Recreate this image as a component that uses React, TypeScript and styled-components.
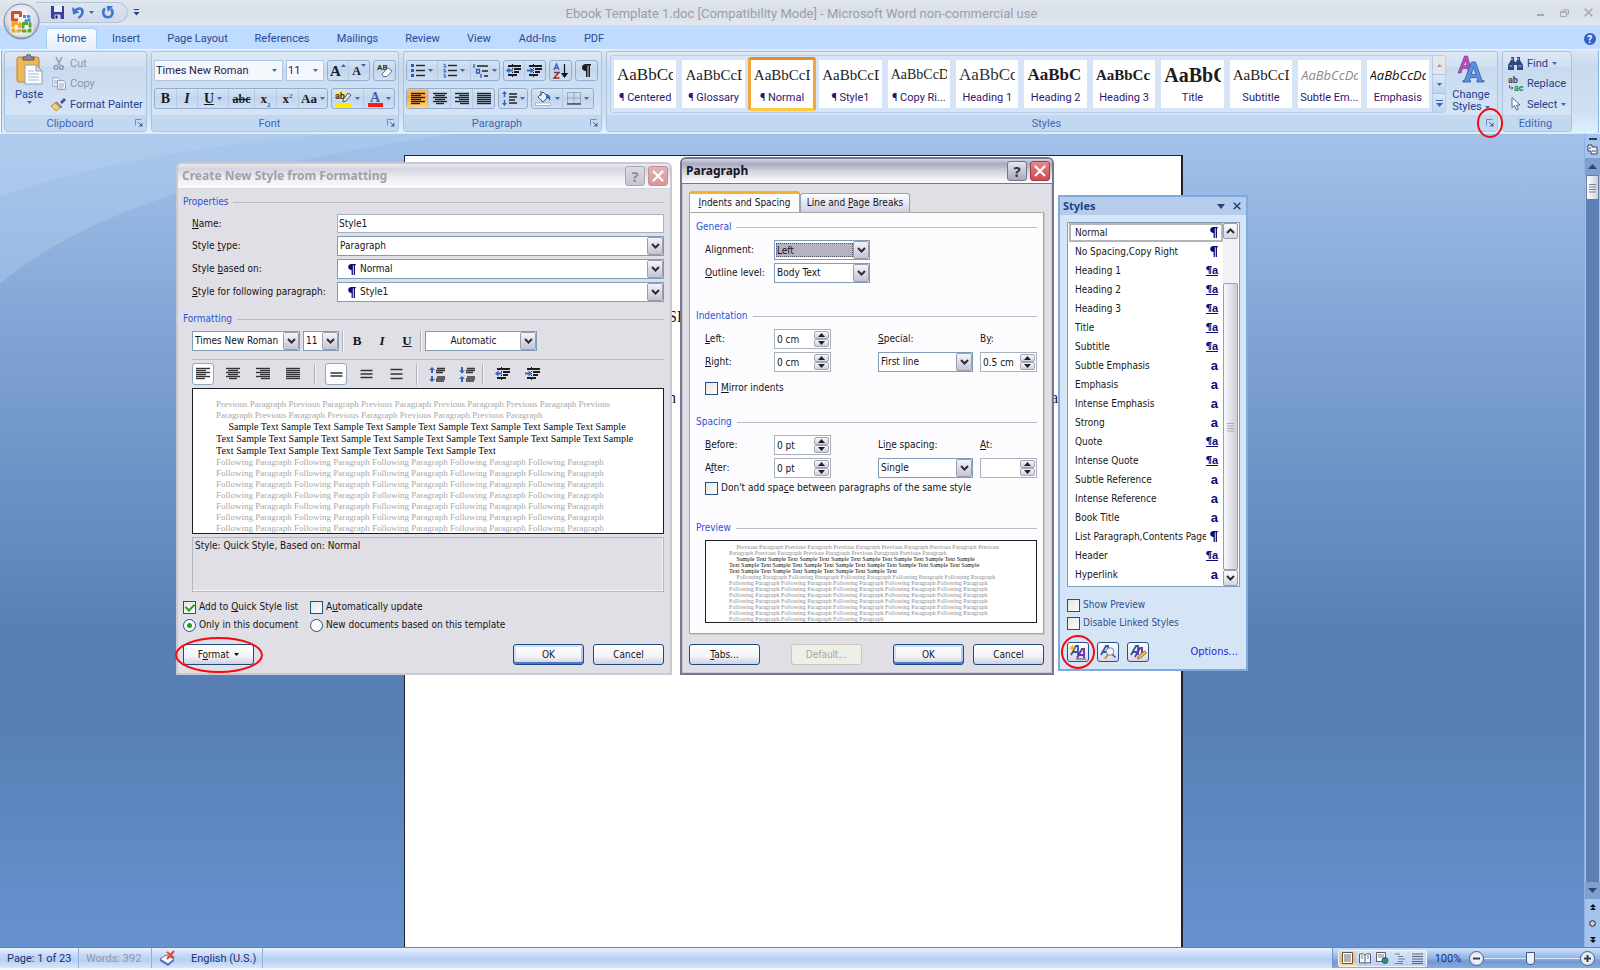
import React from "react";
import styled, { createGlobalStyle, css } from "styled-components";

const UI = `Roboto, "Open Sans", sans-serif`;
const DLG = `"DejaVu Sans Condensed", "DejaVu Sans", sans-serif`;
const SERIF = `"Liberation Serif", serif`;

const Global = createGlobalStyle`
  * { box-sizing: border-box; }
  html, body, #root { height: 100%; }
  body { margin: 0; background: #f4f6f9; font-family: ${UI}; font-size: 11px; color: #1e3a7b; overflow: hidden; }
  button, input, select { font: inherit; color: inherit; }
  svg { display: block; flex: none; overflow: visible; }
`;

const Shell = styled.div`
  height: 100vh;
  display: flex;
  flex-direction: column;
  padding-bottom: 2px;
`;

/* ---------- title bar ---------- */
const TitleBar = styled.header`
  height: 26px;
  flex: none;
  display: flex;
  align-items: center;
  background: linear-gradient(#e3e8ef, #d9dfe8 45%, #e3e8ef);
  border-bottom: 1px solid #cfdcec;
  position: relative;
`;
const OfficeButton = styled.button`
  position: absolute;
  left: 3px;
  top: 3px;
  width: 37px;
  height: 37px;
  padding: 0;
  border: 0;
  background: none;
  z-index: 3;
`;
const QuickAccess = styled.div`
  display: flex;
  align-items: center;
  gap: 8px;
  height: 21px;
  width: 92px;
  margin-left: 36px;
  padding-left: 15px;
  border: 1px solid #b4c3da;
  border-left: 0;
  border-radius: 0 11px 11px 0;
  background: linear-gradient(#dce4ef, #cfdbeb);
`;
const Bare = styled.button`
  border: 0;
  padding: 0;
  background: none;
  display: flex;
  align-items: center;
  gap: 5px;
`;
const MoreButton = styled(Bare)`
  margin-left: 5px;
`;
const DocTitle = styled.h1`
  flex: 1;
  margin: 0;
  text-align: center;
  font-size: 13px;
  font-weight: 400;
  line-height: 16px;
  color: #9b9ea5;
  padding-right: 74px;
  padding-top: 2px;
`;
const WindowButtons = styled.div`
  display: flex;
  align-items: center;
  gap: 15px;
  padding-right: 7px;
`;

/* ---------- tabs ---------- */
const TabBar = styled.nav`
  height: 23px;
  flex: none;
  display: flex;
  align-items: stretch;
  padding: 2px 3px 0 46px;
  background: #bfdbff;
  position: relative;
  z-index: 1;
`;
const RibbonTab = styled.button<{ $on?: boolean; $w: number }>`
  width: ${(p) => p.$w}px;
  border: 1px solid ${(p) => (p.$on ? "#a3d0ee" : "transparent")};
  border-bottom: 0;
  border-radius: 4px 4px 0 0;
  padding: 0 0 2px;
  background: ${(p) => (p.$on ? "linear-gradient(#fafcff, #e6effa)" : "none")};
  color: #2a4a96;
`;
const Spacer = styled.div`
  flex: 1;
`;

/* ---------- ribbon ---------- */
const Ribbon = styled.section`
  flex: none;
  height: 85px;
  display: flex;
  gap: 4px;
  margin: 0 1px;
  padding: 1px 26px 1px 2px;
  border: 1px solid #8db4e3;
  border-top-color: #e8f4fc;
  border-bottom-color: #c9eefa;
  border-radius: 3px;
  background: linear-gradient(#dbe6f4, #c9daee 20%, #cfe0f3 75%, #dff2fd);
`;
const Group = styled.div<{ $w?: number }>`
  ${(p) => (p.$w ? `width: ${p.$w}px;` : "flex: 1; min-width: 0;")}
  display: flex;
  flex-direction: column;
  border: 1px solid #aac4e0;
  border-radius: 3px;
  background: linear-gradient(#dde8f5, #d2e0f1 18%, #c8daef 19%, #d9e8f9);
`;
const GroupBody = styled.div<{ $pad?: string }>`
  flex: 1;
  min-height: 0;
  display: flex;
  padding: ${(p) => p.$pad || "0"};
`;
const GroupLabel = styled.div`
  height: 16px;
  display: flex;
  align-items: center;
  justify-content: flex-end;
  padding-right: 3px;
  background: #c1d8f0;
  color: #4167b0;
  border-radius: 0 0 2px 2px;
`;
const LabelText = styled.span`
  flex: 1;
  text-align: center;
`;
const Launcher = styled(Bare)`
  position: relative;
`;
const BigButton = styled.button<{ $w: number }>`
  width: ${(p) => p.$w}px;
  border: 0;
  padding: 0;
  background: none;
  display: flex;
  flex-direction: column;
  align-items: center;
  color: #23418c;
  line-height: 12px;
  white-space: nowrap;
`;
const BigLabel = styled.span<{ $top: number }>`
  display: flex;
  flex-direction: column;
  align-items: center;
  padding-top: ${(p) => p.$top}px;
  span { display: flex; align-items: center; gap: 3px; }
`;
const SmallButtons = styled.div`
  display: flex;
  flex-direction: column;
  justify-content: space-between;
  align-items: flex-start;
`;
const SmallButton = styled.button`
  border: 0;
  padding: 0;
  background: none;
  height: 18px;
  display: flex;
  align-items: center;
  gap: 4px;
  color: #23418c;
  white-space: nowrap;
  &:disabled { color: #8f959f; }
`;
const IconSlot = styled.span`
  width: 15px;
  display: flex;
  justify-content: center;
`;
const TwoRows = styled.div`
  display: flex;
  flex-direction: column;
  gap: 7px;
  flex: 1;
`;
const ToolRow = styled.div`
  display: flex;
  gap: 3px;
  height: 21px;
`;
const Cluster = styled.div`
  display: flex;
  border: 1px solid #92add0;
  border-radius: 3px;
  background: linear-gradient(#d5e3f4, #c3d6ee 50%, #cfdff3);
`;
const Tool = styled.button<{ $w: number; $on?: boolean }>`
  width: ${(p) => p.$w}px;
  border: 0;
  border-right: 1px solid #b5cae5;
  padding: 0;
  display: flex;
  align-items: center;
  justify-content: center;
  gap: 3px;
  color: #1b1b1b;
  background: ${(p) => (p.$on ? "linear-gradient(#f9bd6b, #fba63e 45%, #ffd972)" : "none")};
  &:last-child { border-right: 0; }
`;
const SizeTool = styled(Tool)`
  gap: 0;
  svg { margin-bottom: 10px; }
`;
const Glyph = styled.span<{ $s?: number; $i?: boolean; $u?: boolean; $x?: boolean }>`
  font-family: ${SERIF};
  font-weight: 700;
  font-size: ${(p) => p.$s || 13}px;
  line-height: 16px;
  font-style: ${(p) => (p.$i ? "italic" : "normal")};
  text-decoration: ${(p) => (p.$u ? "underline" : p.$x ? "line-through" : "none")};
  sub, sup { font-size: 7px; line-height: 0; color: #2c5cb8; }
`;
const ComboCell = styled.label<{ $w: number }>`
  width: ${(p) => p.$w}px;
  display: grid;
  align-items: center;
  justify-items: end;
  background: #f4f8fd;
  border: 1px solid #b2c7e1;
  padding-right: 5px;
  & > * { grid-area: 1 / 1; }
  & > svg { pointer-events: none; }
`;
const FlatSelect = styled.select`
  appearance: none;
  border: 0;
  padding: 0 0 0 1px;
  width: 100%;
  height: 19px;
  background: none;
  color: #2a1850;
`;
const Gallery = styled.div`
  flex: 1;
  min-width: 0;
  height: 58px;
  display: flex;
  border: 1px solid #bad0ea;
  border-radius: 3px;
  background: #d5e5f7;
`;
const Tiles = styled.div`
  flex: 1;
  min-width: 0;
  display: grid;
  grid-template-columns: repeat(12, 1fr);
`;
const Tile = styled.button<{ $on?: boolean }>`
  min-width: 0;
  margin: ${(p) => (p.$on ? "1px 0" : "4px 3px")};
  padding: 0;
  border: ${(p) => (p.$on ? "3px solid" : "0")};
  border-color: #dd8f36 #f3a63b #ffc83d #f3a63b;
  border-radius: ${(p) => (p.$on ? 3 : 0)}px;
  background: #fff;
  display: flex;
  flex-direction: column;
  align-items: center;
  color: #2c1670;
  overflow: hidden;
`;
const Sample = styled.span<{ $s: number; $b?: boolean; $c?: string; $sans?: boolean }>`
  display: block;
  width: calc(100% - 6px);
  height: 30px;
  line-height: 30px;
  text-align: left;
  overflow: hidden;
  white-space: nowrap;
  font-family: ${(p) => (p.$sans ? `"Open Sans", sans-serif` : SERIF)};
  font-style: ${(p) => (p.$sans ? "italic" : "normal")};
  font-weight: ${(p) => (p.$b ? 700 : 400)};
  font-size: ${(p) => p.$s}px;
  color: ${(p) => p.$c || "#1c1c1c"};
`;
const TileName = styled.span`
  white-space: nowrap;
  line-height: 16px;
`;
const GalleryScroll = styled.div`
  width: 13px;
  display: flex;
  flex-direction: column;
  border-left: 1px solid #b5cbe6;
`;
const GalleryArrow = styled.button<{ $off?: boolean }>`
  flex: 1;
  border: 0;
  border-bottom: 1px solid #a9c3e2;
  padding: 0;
  display: flex;
  align-items: center;
  justify-content: center;
  background: ${(p) => (p.$off ? "#e4e6ea" : "linear-gradient(#d9e8f9, #bed5f0)")};
  &:last-child { border-bottom: 0; }
`;

/* ---------- marks ---------- */
const Ring = styled.span<{ $w: number; $h: number }>`
  position: absolute;
  left: 50%;
  top: 50%;
  width: ${(p) => p.$w}px;
  height: ${(p) => p.$h}px;
  transform: translate(-50%, -50%);
  border: 2px solid #f40a10;
  border-radius: 50%;
  pointer-events: none;
  z-index: 5;
`;

/* ---------- workspace ---------- */
const Workspace = styled.main`
  flex: 1;
  min-height: 0;
  display: flex;
  position: relative;
  overflow: hidden;
  background: linear-gradient(#a3c2ea, #7fa3d4 25%, #587fb5 62%, #577fb4 72%, #6693d0);
`;
const Swoosh = styled.svg`
  position: absolute;
  left: 0;
  top: 0;
`;
const DocArea = styled.div`
  flex: 1;
  padding-top: 21px;
  display: flex;
  justify-content: center;
  position: relative;
`;
const Paper = styled.article`
  width: 779px;
  margin-left: 3px;
  background: #fff;
  border: 1px solid #1c2230;
  border-bottom: 0;
  border-right-width: 2px;
  padding-top: 152px;
  font-family: ${SERIF};
  color: #141414;
  font-size: 16px;
`;
const PaperLine = styled.p<{ $gap?: number }>`
  display: flex;
  justify-content: space-between;
  margin: 0 123px ${(p) => p.$gap || 0}px 263px;
  line-height: 18px;
`;
const ScrollRail = styled.div`
  width: 16px;
  display: flex;
  flex-direction: column;
  align-items: center;
  background: #a4c3ee;
  border-left: 1px solid #8fb2e0;
  padding-top: 4px;
`;
const RailButton = styled.button<{ $h: number; $dark?: boolean }>`
  height: ${(p) => p.$h}px;
  width: 100%;
  border: 0;
  padding: 0;
  display: flex;
  align-items: center;
  justify-content: center;
  background: ${(p) => (p.$dark ? "#7f9fcc" : "none")};
`;
const RailTrack = styled.div`
  flex: 1;
  width: 13px;
  background: #5c80b4;
`;
const RailThumb = styled.div`
  height: 25px;
  border: 1px solid #6b7d9c;
  border-radius: 2px;
  background: linear-gradient(90deg, #fdfeff, #c8d2e0);
  display: flex;
  align-items: center;
  justify-content: center;
`;

/* ---------- dialogs ---------- */
const Dialog = styled.section<{ $x: number; $y: number; $w: number; $active?: boolean }>`
  position: absolute;
  left: ${(p) => p.$x}px;
  top: ${(p) => p.$y}px;
  width: ${(p) => p.$w}px;
  border: 2px solid ${(p) => (p.$active ? "#77778f" : "#c9c9d6")};
  border-radius: 6px 6px 0 0;
  background: #e0dfe5;
  font-family: ${DLG};
  font-size: 10px;
  line-height: 14px;
  color: #141420;
  ${(p) => p.$active && css`box-shadow: inset 0 0 0 1px #c7c7d6;`}
`;
const DialogTitle = styled.header<{ $active?: boolean }>`
  height: 25px;
  display: flex;
  align-items: center;
  gap: 3px;
  padding: 0 2px 0 4px;
  border-radius: 4px 4px 0 0;
  border-bottom: ${(p) => (p.$active ? "1px solid #77778f" : "1px solid #d4d4dc")};
  background: ${(p) =>
    p.$active
      ? "linear-gradient(#d5d5e2, #a9a9c2 20%, #d8d8e4 55%, #fdfdff)"
      : "linear-gradient(#ebebf1, #d5d5e0 20%, #ebebf1 55%, #fdfdfe)"};
  h2 {
    flex: 1;
    margin: 0;
    font-family: "Noto Sans", sans-serif;
    font-size: 12px;
    font-weight: 700;
    color: ${(p) => (p.$active ? "#15151f" : "#a0a0a8")};
  }
`;
const CaptionButton = styled.button<{ $close?: boolean; $active?: boolean }>`
  width: 20px;
  height: 20px;
  padding: 0;
  display: flex;
  align-items: center;
  justify-content: center;
  border-radius: 3px;
  border: 1px solid ${(p) => (p.$close ? (p.$active ? "#9c3a45" : "#c58d94") : p.$active ? "#74748c" : "#a7a7b5")};
  background: ${(p) =>
    p.$close
      ? p.$active ? "linear-gradient(#e88a8a, #cf4650)" : "linear-gradient(#e3b3b5, #d6969b)"
      : p.$active ? "linear-gradient(#e6e6ef, #a9a9bf)" : "linear-gradient(#dddde5, #c4c4cf)"};
  font-family: "Noto Sans", sans-serif;
  font-weight: 700;
  font-size: 15px;
  color: ${(p) => (p.$active ? "#33333f" : "#8f8f9a")};
`;
const Legend = styled.h3`
  display: flex;
  align-items: center;
  gap: 5px;
  margin: 0;
  height: 14px;
  font-size: 10px;
  font-weight: 400;
  color: #2b53d6;
  &::after { content: ""; flex: 1; border-top: 1px solid #b9b9c2; }
`;
const NewStyleBody = styled.div`
  padding: 6px 6px 8px 5px;
`;
const Fields = styled.div`
  display: grid;
  grid-template-columns: 145px 1fr;
  row-gap: 3px;
  align-items: center;
  padding: 5px 0 10px 9px;
`;
const Box = styled.input<{ $w?: string }>`
  width: ${(p) => p.$w || "100%"};
  height: 19px;
  border: 1px solid #a8b1bd;
  padding: 0 1px;
  background: #fff;
`;
const Drop = styled.div<{ $w?: string }>`
  width: ${(p) => p.$w || "100%"};
  height: 20px;
  display: grid;
  grid-template-columns: 1fr 16px;
  align-items: center;
  border: 1px solid #7f9db9;
  background: #fff;
`;
const DropSelect = styled.select<{ $pad?: number; $hot?: boolean; $center?: boolean }>`
  grid-area: 1 / 1 / 2 / 3;
  appearance: none;
  width: 100%;
  height: 18px;
  border: 0;
  padding: 0 17px 0 ${(p) => p.$pad ?? 2}px;
  background: none;
  outline: 0;
  text-align: ${(p) => (p.$center ? "center" : "left")};
  ${(p) =>
    p.$hot &&
    css`
      background: #b3b3c1;
      border: 1px dotted #55556a;
      height: 14px;
      width: 77px;
      margin-left: 1px;
      padding: 0;
      line-height: 11px;
    `}
`;
const DropArrow = styled.span`
  grid-area: 1 / 2;
  height: 18px;
  display: flex;
  align-items: center;
  justify-content: center;
  border: 1px solid #9c9cae;
  border-radius: 2px;
  background: linear-gradient(#f4f4f9, #c4c4d3);
  pointer-events: none;
`;
const Mark = styled.span`
  grid-area: 1 / 1;
  padding-left: 10px;
  pointer-events: none;
`;
const Bar = styled.div`
  display: flex;
  align-items: center;
  padding-left: 9px;
`;
const FontBar = styled(Bar)`
  margin-top: 4px;
  gap: 3px;
`;
const ParaBar = styled(Bar)`
  margin: 7px 0 3px 9px;
  padding: 3px 0 0;
  border-top: 1px solid #b9b9c2;
`;
const Rule = styled.span<{ $l?: number; $r?: number }>`
  width: 2px;
  height: 21px;
  border-left: 1px solid #b0b0ba;
  border-right: 1px solid #f7f7fa;
  margin: 0 ${(p) => p.$r ?? 0}px 0 ${(p) => p.$l ?? 0}px;
`;
const IconToggle = styled.button<{ $w?: number; $on?: boolean }>`
  width: ${(p) => p.$w || 22}px;
  height: 22px;
  padding: 0;
  display: flex;
  align-items: center;
  justify-content: center;
  border: 1px solid ${(p) => (p.$on ? "#8fa8c0" : "transparent")};
  border-radius: 3px;
  background: ${(p) => (p.$on ? "#fcfdfe" : "none")};
`;
const ToggleSet = styled.div<{ $gap?: number }>`
  display: flex;
  gap: ${(p) => p.$gap ?? 8}px;
`;
const Preview = styled.div`
  margin-left: 9px;
  height: 146px;
  border: 1px solid #1d1d24;
  background: #fff;
  padding: 10px 0 0 23px;
  overflow: hidden;
  font-family: ${SERIF};
  font-size: 9px;
  line-height: 11px;
  color: #a8a8a8;
  white-space: pre;
`;
const SmallPreview = styled.div`
  margin: 5px 0 0 9px;
  height: 83px;
  border: 1px solid #1d1d24;
  background: #fff;
  padding: 3px 0 0 23px;
  overflow: hidden;
  font-family: ${SERIF};
  font-size: 6px;
  line-height: 6px;
  color: #8b8b8b;
  white-space: pre;
`;
const SampleLines = styled.div<{ $lh?: number; $s?: number }>`
  color: #080808;
  ${(p) => p.$lh && `line-height: ${p.$lh}px;`}
  ${(p) => p.$s && `font-size: ${p.$s}px;`}
`;
const Description = styled.div`
  margin: 3px 0 8px 9px;
  height: 55px;
  border: 1px solid #b2b8c1;
  box-shadow: inset -1px -1px 0 #f6f6f9;
  padding: 1px 2px;
`;
const Choices = styled.div`
  display: grid;
  grid-template-columns: 127px 1fr;
  row-gap: 4px;
`;
const Choice = styled.label`
  display: flex;
  align-items: center;
  gap: 3px;
  height: 14px;
  white-space: nowrap;
`;
const Check = styled.input.attrs({ type: "checkbox" })`
  appearance: none;
  flex: none;
  width: 13px;
  height: 13px;
  margin: 0;
  border: 1px solid #22527f;
  background: linear-gradient(135deg, #e6e6e2, #fdfdfd);
  display: flex;
  align-items: center;
  justify-content: center;
  &:checked::after {
    content: "";
    width: 4px;
    height: 7px;
    margin-bottom: 2px;
    border: solid #21a121;
    border-width: 0 2px 2px 0;
    transform: rotate(45deg);
  }
`;
const Radio = styled.input.attrs({ type: "radio" })`
  appearance: none;
  flex: none;
  width: 13px;
  height: 13px;
  margin: 0;
  border: 1px solid #22527f;
  border-radius: 50%;
  background: #fbfbfa;
  display: flex;
  align-items: center;
  justify-content: center;
  &:checked::after { content: ""; width: 5px; height: 5px; border-radius: 50%; background: #21a121; }
`;
const Push = styled.button<{ $main?: boolean }>`
  position: relative;
  width: 71px;
  height: 21px;
  padding: 0;
  border: 1px solid #1f4a80;
  border-radius: 3px;
  background: linear-gradient(#fff, #f3f3f8 60%, #cfcfdf);
  display: flex;
  align-items: center;
  justify-content: center;
  gap: 5px;
  ${(p) => p.$main && css`box-shadow: inset 0 2px 0 #cfe0fb, inset 0 -2px 0 #4d78cc, inset 2px 0 0 #cfdff8, inset -2px 0 0 #b5caf0;`}
  &:disabled { color: #a5a59c; border-color: #c9c7ba; background: #efefea; }
`;
const Footer = styled.footer<{ $top: number }>`
  display: flex;
  align-items: center;
  margin-top: ${(p) => p.$top}px;
  gap: 9px;
`;
const ParagraphBody = styled.div`
  padding: 7px 8px 8px 7px;
`;
const TabStrip = styled.div`
  display: flex;
  align-items: flex-end;
`;
const DlgTab = styled.button<{ $on?: boolean; $w: number }>`
  width: ${(p) => p.$w}px;
  height: ${(p) => (p.$on ? 21 : 19)}px;
  padding: 0;
  white-space: nowrap;
  border: 1px solid #91a7b4;
  border-bottom: 0;
  border-radius: 3px 3px 0 0;
  background: ${(p) => (p.$on ? "#fcfcfe" : "linear-gradient(#fff, #cfcfe0)")};
  ${(p) => p.$on && css`border-top: 3px solid #f5b02f;`}
`;
const TabPanel = styled.div`
  border: 1px solid #a3aa9e;
  box-shadow: 1px 1px 0 #c9c9bd;
  background: #fcfcfe;
  padding: 7px 6px 10px 6px;
`;
const Grid2 = styled.div<{ $gap: number }>`
  display: grid;
  grid-template-columns: 69px 104px 102px 1fr;
  row-gap: 3px;
  align-items: center;
  padding: 6px 0 ${(p) => p.$gap}px 9px;
`;
const Wide = styled.div<{ $top: number }>`
  grid-column: 1 / -1;
  padding-top: ${(p) => p.$top}px;
`;
const Spin = styled.div`
  width: 57px;
  height: 20px;
  display: flex;
  align-items: center;
  border: 1px solid #a8b1bd;
  background: #fff;
  padding-right: 1px;
  input { flex: 1; min-width: 0; height: 18px; border: 0; padding: 0 2px; background: none; outline: 0; }
`;
const SpinArrows = styled.div`
  width: 15px;
  display: flex;
  flex-direction: column;
`;
const SpinButton = styled.button`
  height: 8px;
  padding: 0;
  border: 1px solid #a5a5b5;
  border-radius: 2px;
  background: linear-gradient(#f7f7fb, #d0d0dc);
  display: flex;
  align-items: center;
  justify-content: center;
`;

/* ---------- styles pane ---------- */
const Pane = styled.aside`
  position: absolute;
  left: 1058px;
  top: 61px;
  width: 190px;
  border: 2px solid #82a9dd;
  background: #d6e5f5;
  font-family: ${DLG};
  font-size: 10px;
  line-height: 14px;
  color: #2d4f93;
`;
const PaneTitle = styled.header`
  height: 18px;
  display: flex;
  align-items: center;
  gap: 8px;
  padding: 0 5px 0 3px;
  background: #b5cdeb;
  h2 { flex: 1; margin: 0; font-family: "Noto Sans", sans-serif; font-size: 11px; font-weight: 700; color: #1d4389; }
`;
const PaneBody = styled.div`
  padding: 7px 6px 7px 7px;
`;
const ListBox = styled.div`
  display: flex;
  height: 365px;
  border: 1px solid #7f9db9;
  background: #fff;
  padding: 0 1px;
`;
const List = styled.ul`
  flex: 1;
  min-width: 0;
  margin: 0;
  padding: 0;
  list-style: none;
`;
const Item = styled.li<{ $on?: boolean }>`
  height: 19px;
  display: flex;
  align-items: center;
  gap: 4px;
  padding: ${(p) => (p.$on ? "0 3px 0 4px" : "0 5px 0 6px")};
  border: ${(p) => (p.$on ? "2px solid #b4b4bd" : "0")};
  color: #161620;
`;
const ItemName = styled.span`
  flex: 1;
  min-width: 0;
  overflow: hidden;
  white-space: nowrap;
`;
const Kind = styled.span<{ $linked?: boolean }>`
  display: flex;
  align-items: center;
  font-family: "Liberation Sans", sans-serif;
  font-weight: 700;
  font-size: ${(p) => (p.$linked ? 11 : 13)}px;
  line-height: ${(p) => (p.$linked ? 9 : 11)}px;
  color: #0b0b7a;
  border-bottom: ${(p) => (p.$linked ? "1px solid #0b0b7a" : "0")};
`;
const ListScroll = styled.div`
  width: 15px;
  display: flex;
  flex-direction: column;
  background: #f1f1f6;
`;
const ListArrow = styled.button`
  height: 16px;
  padding: 0;
  border: 1px solid #9c9cae;
  border-radius: 2px;
  background: linear-gradient(#fcfcfe, #d5d5e0);
  display: flex;
  align-items: center;
  justify-content: center;
`;
const ListThumb = styled.div`
  flex: 1;
  margin-top: 44px;
  border: 1px solid #9c9cae;
  border-radius: 2px;
  background: linear-gradient(90deg, #f8f8fb, #cdcddb);
  display: flex;
  align-items: center;
  justify-content: center;
`;
const PaneChecks = styled.div`
  display: flex;
  flex-direction: column;
  gap: 4px;
  padding: 11px 0 12px;
`;
const PaneFooter = styled.div`
  display: flex;
  align-items: center;
  gap: 8px;
  padding: 0 2px 0 0;
  a { margin-left: auto; font-size: 11px; color: #2626e0; text-decoration: none; }
`;
const PaneButton = styled.button`
  position: relative;
  width: 22px;
  height: 20px;
  padding: 0;
  border: 1px solid #25508a;
  border-radius: 3px;
  background: linear-gradient(#fff, #d8d8e6);
  display: flex;
  align-items: center;
  justify-content: center;
`;

/* ---------- status bar ---------- */
const StatusBar = styled.footer`
  flex: none;
  height: 21px;
  display: flex;
  border-top: 1px solid #5b83bd;
  background: linear-gradient(#eaf3fe, #c5daf7 35%, #b5cff4 60%, #d7e6fa);
  color: #1c2f70;
`;
const StatusCell = styled.div<{ $w: number; $dim?: boolean }>`
  width: ${(p) => p.$w}px;
  display: flex;
  align-items: center;
  padding-left: 7px;
  gap: 15px;
  border-right: 1px solid #8fb0de;
  color: ${(p) => (p.$dim ? "#8f96a3" : "inherit")};
  white-space: nowrap;
`;
const StatusRight = styled.div`
  width: 268px;
  display: flex;
  align-items: center;
  padding: 0 5px;
  background: linear-gradient(#cfe1fa, #8fb4e9 50%, #7298cf 70%, #86addf);
  border-left: 1px solid #6f96cf;
`;
const Views = styled.div`
  display: flex;
  width: 89px;
  height: 17px;
  border: 1px solid #f0f6fd;
  border-radius: 2px;
  background: linear-gradient(#d9e7f9, #b8d0f0);
`;
const ViewButton = styled.button<{ $on?: boolean }>`
  flex: 1;
  border: 0;
  border-right: 1px solid #c9dbf2;
  padding: 0;
  display: flex;
  align-items: center;
  justify-content: center;
  background: ${(p) => (p.$on ? "linear-gradient(#fbd49c, #fbb65c 60%, #ffe38c)" : "none")};
  &:last-child { border-right: 0; }
`;
const Percent = styled.span`
  width: 42px;
  text-align: center;
`;
const RoundButton = styled.button`
  width: 15px;
  height: 15px;
  flex: none;
  padding: 0;
  border: 1px solid #4d6486;
  border-radius: 50%;
  background: radial-gradient(#fff, #cfdaea);
  display: flex;
  align-items: center;
  justify-content: center;
`;
const Zoom = styled.input.attrs({ type: "range" })`
  appearance: none;
  flex: 1;
  min-width: 0;
  margin: 0;
  height: 15px;
  background: linear-gradient(#dce9fb, #dce9fb) center / 100% 1px no-repeat;
  &::-webkit-slider-thumb {
    appearance: none;
    width: 9px;
    height: 13px;
    border: 1px solid #455c80;
    border-radius: 1px 1px 5px 5px;
    background: #eef2f8;
  }
`;

/* ---------- icons ---------- */
const Caret = ({ c = "#3e68ae", w = 5 }: { c?: string; w?: number }) => (
  <svg width={w} height={Math.ceil(w * 0.55)} viewBox="0 0 5 3" preserveAspectRatio="none"><path d="M0 0h5L2.5 3z" fill={c} /></svg>
);
const UpCaret = ({ c = "#3e68ae", w = 5 }: { c?: string; w?: number }) => (
  <svg width={w} height={Math.ceil(w * 0.55)} viewBox="0 0 5 3" preserveAspectRatio="none"><path d="M0 3h5L2.5 0z" fill={c} /></svg>
);
const Chevron = ({ up }: { up?: boolean }) => (
  <svg width={9} height={6} viewBox="0 0 9 6">
    <path d={up ? "M1 5l3.500-3.500L8 5" : "M1 1l3.500 3.500L8 1"} fill="none" stroke="#2c2c38" strokeWidth={2} />
  </svg>
);
const Lines = ({ w, c = "#222" }: { w: [number, number][]; c?: string }) => (
  <svg width={14} height={12} viewBox="0 0 14 12">
    {w.map(([a, b], i) => <path key={i} d={`M${a} ${i * 2 + 0.5}H${b}`} stroke={c} strokeWidth={1.400} />)}
  </svg>
);
const L: Record<string, [number, number][]> = {
  left: [[0, 14], [0, 10], [0, 14], [0, 10], [0, 14], [0, 9]],
  center: [[0, 14], [2, 12], [0, 14], [2, 12], [0, 14], [3, 11]],
  right: [[0, 14], [4, 14], [0, 14], [4, 14], [0, 14], [5, 14]],
  full: [[0, 14], [0, 14], [0, 14], [0, 14], [0, 14], [0, 14]],
};
const Spaced = ({ g }: { g: number }) => (
  <svg width={13} height={14} viewBox="0 0 13 14">
    {(g === 2 ? [6, 9] : g === 3 ? [3.5, 7, 10.5] : [2.5, 7, 11.500]).map((y) => (
      <path key={y} d={`M0.500 ${y}h12`} stroke="#333" strokeWidth={1.5} />
    ))}
  </svg>
);
const Bullets = ({ n }: { n?: boolean }) => (
  <svg width={14} height={13} viewBox="0 0 14 13">
    {[1.5, 6.5, 11.500].map((y) => (
      <g key={y}>
        {n ? <path d={`M0.500 ${y - 1.2}h1.500v2.600M0.500 ${y + 1.400}h3`} stroke="#2c5cb8" fill="none" /> : <rect x={0} y={y - 1.5} width={3} height={3} fill="#2c5cb8" />}
        <path d={`M5 ${y}h9`} stroke="#222" strokeWidth={1.4} />
      </g>
    ))}
  </svg>
);
const MultiLevel = () => (
  <svg width={16} height={14} viewBox="0 0 16 14">
    <path d="M1 0v4M3.500 5.500h3v3.500h-3zM8 10v4" stroke="#2c5cb8" fill="none" strokeWidth={1.3} />
    <path d="M4 2h11M9 7h6M11 12h4" stroke="#222" strokeWidth={1.4} />
  </svg>
);
const Indent = ({ right }: { right?: boolean }) => (
  <svg width={16} height={14} viewBox="0 0 16 14">
    <path d="M2 2h13M8 5h7M8 8h5M2 11h9" stroke="#1d1d1d" strokeWidth={1.8} />
    <path d="M6.500 0v14" stroke="#1d1d1d" strokeDasharray="1 1" />
    <path d={right ? "M7 6.500L3.500 3.500v2H0v2h3.500v2z" : "M0 6.500l3.500-3v2H7v2H3.500v2z"} fill="#3367c7" />
  </svg>
);
const ParaSpace = ({ tight }: { tight?: boolean }) => (
  <svg width={16} height={15} viewBox="0 0 16 15">
    <path d="M8 1.500h8M7 3.500h9M7 5.500h7M8 10h8M7 12h9M7 14h8" stroke="#333" strokeWidth={1.400} />
    {tight ? (
      <path d="M3 6.500l3-3H4V0H2v3.500H0zM3 9l3 3H4v3H2v-3H0z" fill="#2f62c2" />
    ) : (
      <path d="M3 0l3 3H4v3H2V3H0zM3 15l3-3H4V9H2v3H0z" fill="#2f62c2" />
    )}
  </svg>
);
const LineSpacing = () => (
  <svg width={15} height={15} viewBox="0 0 15 15">
    <path d="M2.500 0L5 3H3.200v3H1.800V3H0zM2.500 15L5 12H3.200V9H1.800v3H0z" fill="#2f62c2" />
    <path d="M7 3h8M7 6h8M7 9h6M7 12h8" stroke="#222" strokeWidth={1.4} />
  </svg>
);
const Bucket = () => (
  <svg width={17} height={15} viewBox="0 0 17 15">
    <path d="M3 6l5-5 5 5-5 5z" fill="#eef2f8" stroke="#44506a" />
    <path d="M6 0v5" stroke="#44506a" />
    <path d="M11 3c4 0 5 4 4 7-1-2-2-3-4-3z" fill="#3367c7" />
    <rect x={0.500} y={12} width={15} height={2.500} fill="#fff" stroke="#8a8f9a" strokeWidth={0.6} />
  </svg>
);
const Borders = () => (
  <svg width={14} height={13} viewBox="0 0 14 13">
    <path d="M.5.5h13v11H.5zM7 .5v11M.5 6h13" fill="none" stroke="#777d8a" strokeDasharray="1 1" />
    <path d="M0 12h14" stroke="#444" strokeWidth={1.4} />
  </svg>
);
const SortIcon = () => (
  <svg width={15} height={16} viewBox="0 0 15 16">
    <path d="M1 7l2.500-6L6 7M2 5h3" stroke="#2f62c2" fill="none" strokeWidth={1.3} />
    <path d="M1 9.500h5L1 15h5.500" stroke="#a1281e" fill="none" strokeWidth={1.4} />
    <path d="M11.500 1v12M9 10.500l2.500 3.500 2.500-3.500z" stroke="#111" fill="#111" strokeWidth={1.2} />
  </svg>
);
const Pilcrow = ({ s = 13, c = "#1b1b1b" }: { s?: number; c?: string }) => (
  <svg width={Math.round(s * 0.7)} height={s} viewBox="0 0 9 13">
    <path d="M9 0v1.500H8V13H6.500V1.500H5.500V13H4V7C1.500 7 0 5.500 0 3.500S1.500 0 4 0z" fill={c} />
  </svg>
);
const LaunchIcon = () => (
  <svg width={8} height={8} viewBox="0 0 8 8">
    <path d="M.5 6.500v-6h6" fill="none" stroke="#6d8fc0" />
    <path d="M3 3l3 3" stroke="#4c6da5" /><path d="M7.500 3.500v4h-4z" fill="#4c6da5" />
  </svg>
);
const OfficeLogo = () => (
  <svg width={37} height={37} viewBox="0 0 37 37">
    <defs>
      <radialGradient id="orb" cx="50%" cy="35%" r="65%">
        <stop offset="0" stopColor="#fff" /><stop offset=".7" stopColor="#d3dae5" /><stop offset="1" stopColor="#8d9cb5" />
      </radialGradient>
    </defs>
    <circle cx={18.500} cy={18.500} r={17.500} fill="url(#orb)" stroke="#7d8aa3" />
    <ellipse cx={18.500} cy={27} rx={12} ry={7} fill="#fff" opacity={0.6} />
    <g fill="none" strokeWidth={3} strokeLinejoin="round">
      <path d="M15 17H9.500V9.500h8V14" stroke="#dd4a1c" />
      <path d="M20 13.500h6V18h-5" stroke="#3f8fd6" strokeDasharray="3 1" />
      <path d="M10 20.500h6.500V28H10z" stroke="#f2a51d" strokeDasharray="5 1" />
      <path d="M20 20.500h7V28h-7z" stroke="#5aa532" strokeDasharray="5 1" />
    </g>
  </svg>
);
const Save = () => (
  <svg width={13} height={13} viewBox="0 0 13 13">
    <path d="M0 0h13v13H1.500L0 11.500z" fill="#3b3d9b" /><rect x={3} y={0} width={8} height={6} fill="#e9eefb" />
    <rect x={3.500} y={8.500} width={6} height={4.500} fill="#d7dbe8" /><rect x={4.500} y={9.500} width={2} height={3} fill="#1c1d55" />
  </svg>
);
const Undo = () => (
  <svg width={12} height={13} viewBox="0 0 12 13">
    <path d="M3 5c3-4 8-3 7.500 1.500C10.300 9 8.500 10.500 6.500 12" fill="none" stroke="#3f76cf" strokeWidth={2.600} />
    <path d="M0 1l1 7.500 6.500-2z" fill="#3f76cf" />
  </svg>
);
const Redo = () => (
  <svg width={12} height={13} viewBox="0 0 12 13">
    <path d="M3 2.500C0 5 .8 11 5.500 11.300c5 .3 6.500-5.300 3.500-8.300" fill="none" stroke="#3f76cf" strokeWidth={2.600} />
    <path d="M4.500 0H11L6 6z" fill="#3f76cf" />
  </svg>
);
const PasteIcon = () => (
  <svg width={27} height={31} viewBox="0 0 27 31">
    <rect x={1} y={3} width={22} height={25} rx={2} fill="#efb854" stroke="#b98534" />
    <path d="M7 5V3h3a2.500 2.500 0 0 1 5 0h3v3H7z" fill="#8b8e95" stroke="#5a5d66" />
    <path d="M9 11h11l6 6v13H9z" fill="#fdfdff" stroke="#8fa0bd" /><path d="M20 11v6h6z" fill="#d4dcea" stroke="#8fa0bd" />
    <path d="M12 17h6M12 20h11M12 23h11M12 26h11" stroke="#a9b8d2" />
  </svg>
);
const CutIcon = () => (
  <svg width={12} height={13} viewBox="0 0 12 13">
    <path d="M3 0l4 8M9 0L5 8" stroke="#8fa0b8" strokeWidth={1.600} />
    <circle cx={3} cy={10.500} r={1.900} fill="none" stroke="#7f93b3" strokeWidth={1.300} /><circle cx={8.500} cy={10.500} r={1.900} fill="none" stroke="#7f93b3" strokeWidth={1.300} />
  </svg>
);
const CopyIcon = () => (
  <svg width={14} height={13} viewBox="0 0 14 13">
    <path d="M.5.5h6l2 2v7h-8z" fill="#e2e8f1" stroke="#a5b1c6" /><path d="M5.500 3.500h6l2 2v7h-8z" fill="#eef2f8" stroke="#93a2bb" />
    <path d="M7 7h5M7 9h5M7 11h4M2 4h3M2 6h3" stroke="#a5b1c6" />
  </svg>
);
const BrushIcon = () => (
  <svg width={15} height={13} viewBox="0 0 15 13">
    <path d="M9 4l4-4 2 2-4 4z" fill="#5b4b8a" /><path d="M6 4l5 5-1 1-6-5z" fill="#9aa2b5" stroke="#555" strokeWidth={0.600} />
    <path d="M4.500 5L9 9.500 5 13 0 8z" fill="#f1d36a" stroke="#a57b22" strokeWidth={0.800} />
  </svg>
);
const ChangeIcon = () => (
  <svg width={28} height={28} viewBox="0 0 28 28">
    <path d="M1 18L7.500 1h3L15 18h-3.500l-1-4.500H5.500L4 18zM6.500 10.500h3.300L8.700 5.500z" fill="#b44fbb" stroke="#7d2f89" strokeWidth={0.600} />
    <path d="M6 27v-1.500h1.500L14.500 7h4l6.500 18.500H27V27h-7v-1.500h1l-1-3h-6.500l-1 3h1V27zM14.200 19.500h4.800l-2.400-7.500z" fill="#5b93e0" stroke="#2b57a8" strokeWidth={0.800} />
  </svg>
);
const FindIcon = () => (
  <svg width={15} height={13} viewBox="0 0 15 13">
    <path d="M3 0h3v3l1 2h1l1-2V0h3v3l3 5v5H9V8H6v5H0V8l3-5z" fill="#2c4a80" />
    <path d="M1.500 9h3M10.500 9h3M4 1v2M10 1v2" stroke="#a9c0e6" strokeWidth={1.200} />
  </svg>
);
const ReplaceIcon = () => (
  <svg width={15} height={14} viewBox="0 0 15 14">
    <text x={0} y={6} fontFamily={UI} fontWeight={700} fontSize={9} fill="#444">ab</text>
    <text x={6} y={14} fontFamily={UI} fontWeight={700} fontSize={9} fill="#1d8a2b">ac</text>
    <path d="M1.500 8v3h3M3.500 9.500L5 11l-1.500 1.500" fill="none" stroke="#2f62c2" />
  </svg>
);
const PointerIcon = () => (
  <svg width={10} height={14} viewBox="0 0 10 14">
    <path d="M1 .5v10l2.500-2L5.500 13l2-1-2-4h3.500z" fill="#fff" stroke="#5a6a86" />
  </svg>
);
const EraserIcon = () => (
  <svg width={16} height={15} viewBox="0 0 16 15">
    <text x={0} y={7} fontFamily={UI} fontWeight={700} fontSize={8} fill="#333">AB</text>
    <path d="M5 11l6-6 4 3-5 5.500H6z" fill="#fff" stroke="#66728a" />
  </svg>
);
const HighlightIcon = () => (
  <svg width={17} height={16} viewBox="0 0 17 16">
    <rect x={0} y={0} width={10} height={9} fill="#fff04a" />
    <text x={0} y={8} fontFamily={UI} fontWeight={700} fontSize={9} fill="#333">ab</text>
    <path d="M8 9l5-7 3 2-5 6-3 1z" fill="#dfe6f2" stroke="#4a5b7c" /><rect x={0} y={12} width={16} height={4} fill="#ffee00" />
  </svg>
);
const FontColor = () => (
  <svg width={15} height={16} viewBox="0 0 15 16">
    <text x={2} y={11} fontFamily={SERIF} fontWeight={700} fontSize={14} fill="#3a63ad">A</text>
    <rect x={0} y={12} width={15} height={4} fill="#f21c1c" />
  </svg>
);
const HelpIcon = () => (
  <svg width={14} height={14} viewBox="0 0 14 14">
    <circle cx={7} cy={7} r={6.500} fill="#2d63cf" stroke="#d8e6fb" />
    <text x={4.200} y={10.800} fontFamily={UI} fontWeight={700} fontSize={10} fill="#fff">?</text>
  </svg>
);
const PaneA = ({ kind }: { kind: number }) => (
  <svg width={18} height={15} viewBox="0 0 18 15">
    <path d="M2 10L7 1h2v9M4 7h4" fill="none" stroke="#2b57a8" strokeWidth={1.800} />
    {kind === 0 && <><path d="M8 13l5-9h2v9M10 10h5" fill="none" stroke="#6a35a5" strokeWidth={1.900} /><path d="M7 14h10" stroke="#6a35a5" /><path d="M3.500 0v6M.5 3h6M1.500 1l4 4M5.500 1l-4 4" stroke="#f0b41c" /></>}
    {kind === 1 && <><circle cx={11} cy={6.500} r={3.800} fill="#eaf3fd" stroke="#76839c" /><path d="M9 9.500l-3 4" stroke="#c58a2a" strokeWidth={2} /><path d="M13.500 9.500l3 3" stroke="#6a35a5" strokeWidth={1.500} /></>}
    {kind === 2 && <><path d="M6 12l5-9h2v8" fill="none" stroke="#6a35a5" strokeWidth={1.800} /><path d="M8.500 14l1-3 6-5 2 2-6 5z" fill="#f0bf5a" stroke="#7c5a1c" strokeWidth={0.800} /></>}
  </svg>
);
const Grip = ({ c }: { c: string }) => (
  <svg width={7} height={8} viewBox="0 0 7 8"><path d="M0 .5h7M0 3h7M0 5.500h7M0 8h7" stroke={c} /></svg>
);
const CloseX = ({ c, s = 12 }: { c: string; s?: number }) => (
  <svg width={s} height={s} viewBox="0 0 12 12"><path d="M1 1l10 10M11 1L1 11" stroke={c} strokeWidth={2.200} /></svg>
);
const SpellIcon = () => (
  <svg width={17} height={15} viewBox="0 0 17 15">
    <path d="M1 8l6-4 8 4-6 5z" fill="#f5f7fa" stroke="#5c7096" /><path d="M1 8v2l8 5 6-5V8l-6 5z" fill="#4b78c4" />
    <path d="M8 1l7 6M15 0L8 8" stroke="#e8432a" strokeWidth={2} />
  </svg>
);

/* ---------- data ---------- */
const tabs: [string, number][] = [
  ["Home", 51], ["Insert", 58], ["Page Layout", 85], ["References", 84], ["Mailings", 67],
  ["Review", 63], ["View", 50], ["Add-Ins", 67], ["PDF", 46],
];
const gallery = [
  { n: "¶ Centered", t: "AaBbCc", s: 17 },
  { n: "¶ Glossary", t: "AaBbCcD", s: 15 },
  { n: "¶ Normal", t: "AaBbCcD", s: 15, on: true },
  { n: "¶ Style1", t: "AaBbCcD", s: 15 },
  { n: "¶ Copy Ri...", t: "AaBbCcD", s: 14 },
  { n: "Heading 1", t: "AaBbCc", s: 17, c: "#333" },
  { n: "Heading 2", t: "AaBbC", s: 17, b: true },
  { n: "Heading 3", t: "AaBbCc", s: 15, b: true },
  { n: "Title", t: "AaBbC", s: 20, b: true },
  { n: "Subtitle", t: "AaBbCcD", s: 15 },
  { n: "Subtle Em...", t: "AaBbCcDd", s: 13, c: "#8a8a8a", sans: true },
  { n: "Emphasis", t: "AaBbCcDd", s: 13, c: "#111", sans: true },
];
const styleItems: [string, string][] = [
  ["Normal", "p"], ["No Spacing,Copy Right", "p"], ["Heading 1", "l"], ["Heading 2", "l"], ["Heading 3", "l"],
  ["Title", "l"], ["Subtitle", "l"], ["Subtle Emphasis", "a"], ["Emphasis", "a"], ["Intense Emphasis", "a"],
  ["Strong", "a"], ["Quote", "l"], ["Intense Quote", "l"], ["Subtle Reference", "a"], ["Intense Reference", "a"],
  ["Book Title", "a"], ["List Paragraph,Contents Page", "p"], ["Header", "l"], ["Hyperlink", "a"],
];
const rep = (t: string, n: number) => Array(n).fill(t).join(" ");
const PREV = "Previous Paragraph";
const FOLL = "Following Paragraph";
const SAMP = "Sample Text";

const Select = ({ id, value, w, mark, hot, center, label }: {
  id?: string; value: string; w?: string; mark?: boolean; hot?: boolean; center?: boolean; label?: string;
}) => (
  <Drop $w={w}>
    <DropSelect id={id} aria-label={label} $pad={mark ? 22 : 2} $hot={hot} $center={center} defaultValue={value}>
      <option>{value}</option>
    </DropSelect>
    {mark && <Mark><Pilcrow s={11} c="#0b0b7a" /></Mark>}
    <DropArrow><Chevron /></DropArrow>
  </Drop>
);
const Spinner = ({ id, value }: { id: string; value: string }) => (
  <Spin>
    <input id={id} defaultValue={value} />
    <SpinArrows>
      <SpinButton aria-label="Increase"><UpCaret c="#222" w={7} /></SpinButton>
      <SpinButton aria-label="Decrease"><Caret c="#222" w={7} /></SpinButton>
    </SpinArrows>
  </Spin>
);

function RibbonArea() {
  return (
    <Ribbon>
      <Group $w={143}>
        <GroupBody $pad="2px 0 2px 2px">
          <BigButton $w={44}>
            <PasteIcon /><BigLabel $top={4}>Paste</BigLabel><Caret />
          </BigButton>
          <SmallButtons>
            <SmallButton disabled><IconSlot><CutIcon /></IconSlot>Cut</SmallButton>
            <SmallButton disabled><IconSlot><CopyIcon /></IconSlot>Copy</SmallButton>
            <SmallButton><IconSlot><BrushIcon /></IconSlot>Format Painter</SmallButton>
          </SmallButtons>
        </GroupBody>
        <GroupLabel><LabelText>Clipboard</LabelText><Launcher aria-label="Clipboard options"><LaunchIcon /></Launcher></GroupLabel>
      </Group>

      <Group $w={248}>
        <GroupBody $pad="8px 2px 0 2px">
          <TwoRows>
            <ToolRow>
              <ComboCell $w={129}>
                <FlatSelect aria-label="Font"><option>Times New Roman</option></FlatSelect><Caret />
              </ComboCell>
              <ComboCell $w={38}>
                <FlatSelect aria-label="Font size"><option>11</option></FlatSelect><Caret />
              </ComboCell>
              <Cluster>
                <SizeTool $w={21} aria-label="Grow font"><Glyph $s={15}>A</Glyph><UpCaret /></SizeTool>
                <SizeTool $w={20} aria-label="Shrink font"><Glyph $s={12}>A</Glyph><Caret /></SizeTool>
              </Cluster>
              <Cluster><Tool $w={21} aria-label="Clear formatting"><EraserIcon /></Tool></Cluster>
            </ToolRow>
            <ToolRow>
              <Cluster>
                <Tool $w={22}><Glyph $s={14}>B</Glyph></Tool>
                <Tool $w={21}><Glyph $s={14} $i>I</Glyph></Tool>
                <Tool $w={31}><Glyph $s={14} $u>U</Glyph><Caret /></Tool>
                <Tool $w={26}><Glyph $s={12} $x>abc</Glyph></Tool>
                <Tool $w={22}><Glyph>x<sub>2</sub></Glyph></Tool>
                <Tool $w={22}><Glyph>x<sup>2</sup></Glyph></Tool>
                <Tool $w={28}><Glyph>Aa</Glyph><Caret /></Tool>
              </Cluster>
              <Cluster>
                <Tool $w={32} aria-label="Highlight"><HighlightIcon /><Caret /></Tool>
                <Tool $w={30} aria-label="Font color"><FontColor /><Caret /></Tool>
              </Cluster>
            </ToolRow>
          </TwoRows>
        </GroupBody>
        <GroupLabel><LabelText>Font</LabelText><Launcher aria-label="Font options"><LaunchIcon /></Launcher></GroupLabel>
      </Group>

      <Group $w={199}>
        <GroupBody $pad="8px 2px 0 2px">
          <TwoRows>
            <ToolRow>
              <Cluster>
                <Tool $w={31} aria-label="Bullets"><Bullets /><Caret /></Tool>
                <Tool $w={33} aria-label="Numbering"><Bullets n /><Caret /></Tool>
                <Tool $w={28} aria-label="Multilevel list"><MultiLevel /><Caret /></Tool>
              </Cluster>
              <Cluster>
                <Tool $w={21} aria-label="Decrease indent"><Indent /></Tool>
                <Tool $w={20} aria-label="Increase indent"><Indent right /></Tool>
              </Cluster>
              <Cluster><Tool $w={21} aria-label="Sort"><SortIcon /></Tool></Cluster>
              <Cluster><Tool $w={21} aria-label="Show marks"><Pilcrow /></Tool></Cluster>
            </ToolRow>
            <ToolRow>
              <Cluster>
                <Tool $w={22} $on aria-label="Align left"><Lines w={L.left} /></Tool>
                <Tool $w={22} aria-label="Center"><Lines w={L.center} /></Tool>
                <Tool $w={22} aria-label="Align right"><Lines w={L.right} /></Tool>
                <Tool $w={21} aria-label="Justify"><Lines w={L.full} /></Tool>
              </Cluster>
              <Cluster><Tool $w={28} aria-label="Line spacing"><LineSpacing /><Caret /></Tool></Cluster>
              <Cluster>
                <Tool $w={31} aria-label="Shading"><Bucket /><Caret /></Tool>
                <Tool $w={30} aria-label="Borders"><Borders /><Caret /></Tool>
              </Cluster>
            </ToolRow>
          </TwoRows>
        </GroupBody>
        <GroupLabel><LabelText>Paragraph</LabelText><Launcher aria-label="Paragraph options"><LaunchIcon /></Launcher></GroupLabel>
      </Group>

      <Group>
        <GroupBody $pad="3px 1px 0 3px">
          <Gallery>
            <Tiles>
              {gallery.map((g) => (
                <Tile key={g.n} $on={g.on}>
                  <Sample $s={g.s} $b={g.b} $c={g.c} $sans={g.sans}>{g.t}</Sample>
                  <TileName>{g.n}</TileName>
                </Tile>
              ))}
            </Tiles>
            <GalleryScroll>
              <GalleryArrow $off aria-label="Row up"><UpCaret c="#9a9ea6" /></GalleryArrow>
              <GalleryArrow aria-label="Row down"><Caret /></GalleryArrow>
              <GalleryArrow aria-label="More styles">
                <svg width={7} height={7} viewBox="0 0 7 7"><path d="M0 .5h7" stroke="#3e68ae" /><path d="M0 3h7L3.500 7z" fill="#3e68ae" /></svg>
              </GalleryArrow>
            </GalleryScroll>
          </Gallery>
          <BigButton $w={50}>
            <ChangeIcon />
            <BigLabel $top={6}>Change<span>Styles <Caret /></span></BigLabel>
          </BigButton>
        </GroupBody>
        <GroupLabel>
          <LabelText>Styles</LabelText>
          <Launcher aria-label="Styles options"><LaunchIcon /><Ring $w={26} $h={30} /></Launcher>
        </GroupLabel>
      </Group>

      <Group $w={70}>
        <GroupBody $pad="2px 0 2px 5px">
          <SmallButtons>
            <SmallButton><IconSlot><FindIcon /></IconSlot>Find<Caret /></SmallButton>
            <SmallButton><IconSlot><ReplaceIcon /></IconSlot>Replace</SmallButton>
            <SmallButton><IconSlot><PointerIcon /></IconSlot>Select<Caret /></SmallButton>
          </SmallButtons>
        </GroupBody>
        <GroupLabel><LabelText>Editing</LabelText></GroupLabel>
      </Group>
    </Ribbon>
  );
}

function NewStyleDialog() {
  return (
    <Dialog $x={176} $y={28} $w={496} aria-label="Create New Style from Formatting">
      <DialogTitle>
        <h2>Create New Style from Formatting</h2>
        <CaptionButton>?</CaptionButton>
        <CaptionButton $close aria-label="Close"><CloseX c="#fff" /></CaptionButton>
      </DialogTitle>
      <NewStyleBody>
        <Legend>Properties</Legend>
        <Fields>
          <label htmlFor="name"><u>N</u>ame:</label><Box id="name" defaultValue="Style1" />
          <label htmlFor="type">Style <u>t</u>ype:</label><Select id="type" value="Paragraph" />
          <label htmlFor="base">Style <u>b</u>ased on:</label><Select id="base" value="Normal" mark />
          <label htmlFor="next"><u>S</u>tyle for following paragraph:</label><Select id="next" value="Style1" mark />
        </Fields>
        <Legend>Formatting</Legend>
        <FontBar>
          <Select label="Font" value="Times New Roman" w="108px" />
          <Select label="Size" value="11" w="36px" />
          <Rule />
          <ToggleSet $gap={5}>
            <IconToggle $w={20}><Glyph>B</Glyph></IconToggle>
            <IconToggle $w={20}><Glyph $i>I</Glyph></IconToggle>
            <IconToggle $w={20}><Glyph $u>U</Glyph></IconToggle>
          </ToggleSet>
          <Rule />
          <Select label="Color" value="Automatic" w="112px" center />
        </FontBar>
        <ParaBar>
          <ToggleSet>
            <IconToggle $on aria-label="Left"><Lines c="#333" w={L.left} /></IconToggle>
            <IconToggle aria-label="Center"><Lines c="#333" w={L.center} /></IconToggle>
            <IconToggle aria-label="Right"><Lines c="#333" w={L.right} /></IconToggle>
            <IconToggle aria-label="Justify"><Lines c="#333" w={L.full} /></IconToggle>
          </ToggleSet>
          <Rule $l={10} $r={9} />
          <ToggleSet>
            <IconToggle $on aria-label="Single"><Spaced g={2} /></IconToggle>
            <IconToggle aria-label="One and a half"><Spaced g={3} /></IconToggle>
            <IconToggle aria-label="Double"><Spaced g={4} /></IconToggle>
          </ToggleSet>
          <Rule $l={9} $r={8} />
          <ToggleSet>
            <IconToggle aria-label="More space"><ParaSpace /></IconToggle>
            <IconToggle aria-label="Less space"><ParaSpace tight /></IconToggle>
          </ToggleSet>
          <Rule $l={4} $r={8} />
          <ToggleSet>
            <IconToggle aria-label="Decrease indent"><Indent /></IconToggle>
            <IconToggle aria-label="Increase indent"><Indent right /></IconToggle>
          </ToggleSet>
        </ParaBar>
        <Preview>
          <div>{rep(PREV, 5)} Previous</div>
          <div>Paragraph {rep(PREV, 4)}</div>
          <SampleLines $lh={12} $s={10}>
            <div>{"     "}{rep(SAMP, 7)} Sample</div>
            <div>Text {rep(SAMP, 7)} Sample</div>
            <div>Text {rep(SAMP, 5)}</div>
          </SampleLines>
          {[0, 1, 2, 3, 4, 5, 6].map((i) => <div key={i}>{rep(FOLL, 5)}</div>)}
        </Preview>
        <Description>Style: Quick Style, Based on: Normal</Description>
        <Choices>
          <Choice><Check defaultChecked /><span>Add to <u>Q</u>uick Style list</span></Choice>
          <Choice><Check /><span>A<u>u</u>tomatically update</span></Choice>
          <Choice><Radio name="scope" defaultChecked />Only in this document</Choice>
          <Choice><Radio name="scope" />New documents based on this template</Choice>
        </Choices>
        <Footer $top={12}>
          <Push><span>F<u>o</u>rmat</span><Caret c="#111" /><Ring $w={88} $h={36} /></Push>
          <Spacer />
          <Push $main>OK</Push>
          <Push>Cancel</Push>
        </Footer>
      </NewStyleBody>
    </Dialog>
  );
}

function ParagraphDialog() {
  return (
    <Dialog $x={680} $y={23} $w={374} $active aria-label="Paragraph">
      <DialogTitle $active>
        <h2>Paragraph</h2>
        <CaptionButton $active>?</CaptionButton>
        <CaptionButton $active $close aria-label="Close"><CloseX c="#fff" /></CaptionButton>
      </DialogTitle>
      <ParagraphBody>
        <TabStrip>
          <DlgTab $on $w={111}><u>I</u>ndents and Spacing</DlgTab>
          <DlgTab $w={110}>Line and <u>P</u>age Breaks</DlgTab>
        </TabStrip>
        <TabPanel>
          <Legend>General</Legend>
          <Grid2 $gap={26}>
            <label htmlFor="al">Ali<u>g</u>nment:</label><Select id="al" value="Left" w="96px" hot /><span /><span />
            <label htmlFor="ol"><u>O</u>utline level:</label><Select id="ol" value="Body Text" w="96px" />
          </Grid2>
          <Legend>Indentation</Legend>
          <Grid2 $gap={20}>
            <label htmlFor="il"><u>L</u>eft:</label><Spinner id="il" value="0 cm" />
            <label htmlFor="sp"><u>S</u>pecial:</label><label htmlFor="by">B<u>y</u>:</label>
            <label htmlFor="ir"><u>R</u>ight:</label><Spinner id="ir" value="0 cm" />
            <Select id="sp" value="First line" w="95px" /><Spinner id="by" value="0.5 cm" />
            <Wide $top={6}><Choice><Check /><span><u>M</u>irror indents</span></Choice></Wide>
          </Grid2>
          <Legend>Spacing</Legend>
          <Grid2 $gap={26}>
            <label htmlFor="sb"><u>B</u>efore:</label><Spinner id="sb" value="0 pt" />
            <label htmlFor="ls">Li<u>n</u>e spacing:</label><label htmlFor="at"><u>A</u>t:</label>
            <label htmlFor="sa">A<u>f</u>ter:</label><Spinner id="sa" value="0 pt" />
            <Select id="ls" value="Single" w="95px" /><Spinner id="at" value="" />
            <Wide $top={0}><Choice><Check /><span>Don't add spa<u>c</u>e between paragraphs of the same style</span></Choice></Wide>
          </Grid2>
          <Legend>Preview</Legend>
          <SmallPreview>
            <div>{"     "}{rep(PREV, 5)} Previous</div>
            <div>Paragraph {rep(PREV, 4)}</div>
            <SampleLines>
              <div>{"     "}{rep(SAMP, 7)} Sample</div>
              <div>Text {rep(SAMP, 7)} Sample</div>
              <div>Text {rep(SAMP, 5)}</div>
            </SampleLines>
            <div>{"     "}{rep(FOLL, 5)}</div>
            {[0, 1, 2, 3, 4, 5].map((i) => <div key={i}>{rep(FOLL, 5)}</div>)}
            <div>{rep(FOLL, 3)}</div>
          </SmallPreview>
        </TabPanel>
        <Footer $top={10}>
          <Push><span><u>T</u>abs...</span></Push>
          <Spacer />
          <Push disabled>Default...</Push>
          <Spacer />
          <Push $main>OK</Push>
          <Push>Cancel</Push>
        </Footer>
      </ParagraphBody>
    </Dialog>
  );
}

function StylesPane() {
  return (
    <Pane aria-label="Styles">
      <PaneTitle>
        <h2>Styles</h2>
        <Bare aria-label="Pane menu"><Caret c="#1d4389" w={8} /></Bare>
        <Bare aria-label="Close pane"><CloseX c="#1d4389" s={8} /></Bare>
      </PaneTitle>
      <PaneBody>
        <ListBox>
          <List>
            {styleItems.map(([n, k], i) => (
              <Item key={n} $on={i === 0}>
                <ItemName>{n}</ItemName>
                {k === "p" && <Pilcrow s={11} c="#0b0b7a" />}
                {k === "l" && <Kind $linked><Pilcrow s={8} c="#0b0b7a" />a</Kind>}
                {k === "a" && <Kind>a</Kind>}
              </Item>
            ))}
          </List>
          <ListScroll>
            <ListArrow aria-label="Scroll up"><Chevron up /></ListArrow>
            <ListThumb><Grip c="#a9a9b8" /></ListThumb>
            <ListArrow aria-label="Scroll down"><Chevron /></ListArrow>
          </ListScroll>
        </ListBox>
        <PaneChecks>
          <Choice><Check />Show Preview</Choice>
          <Choice><Check />Disable Linked Styles</Choice>
        </PaneChecks>
        <PaneFooter>
          <PaneButton aria-label="New style"><PaneA kind={0} /><Ring $w={34} $h={34} /></PaneButton>
          <PaneButton aria-label="Style inspector"><PaneA kind={1} /></PaneButton>
          <PaneButton aria-label="Manage styles"><PaneA kind={2} /></PaneButton>
          <a href="#options">Options...</a>
        </PaneFooter>
      </PaneBody>
    </Pane>
  );
}

export default function App() {
  return (
    <Shell>
      <Global />
      <TitleBar>
        <OfficeButton aria-label="Office"><OfficeLogo /></OfficeButton>
        <QuickAccess>
          <Bare aria-label="Save"><Save /></Bare>
          <Bare aria-label="Undo"><Undo /><Caret /></Bare>
          <Bare aria-label="Redo"><Redo /></Bare>
        </QuickAccess>
        <MoreButton aria-label="Customize toolbar">
          <svg width={7} height={7} viewBox="0 0 7 7"><path d="M1 .5h5" stroke="#23418c" /><path d="M.5 3h6l-3 3.500z" fill="#23418c" /></svg>
        </MoreButton>
        <DocTitle>Ebook Template 1.doc [Compatibility Mode] - Microsoft Word non-commercial use</DocTitle>
        <WindowButtons>
          <Bare aria-label="Minimize"><svg width={8} height={8}><path d="M0 6h7" stroke="#a3a8b2" strokeWidth={2} /></svg></Bare>
          <Bare aria-label="Restore">
            <svg width={9} height={8}><path d="M.5 3h6v4.500h-6zM3 3V.8h5.500V5H7M0 3.200h7" fill="none" stroke="#a3a8b2" /></svg>
          </Bare>
          <Bare aria-label="Close window"><CloseX c="#a3a8b2" s={9} /></Bare>
        </WindowButtons>
      </TitleBar>
      <TabBar>
        {tabs.map(([t, w], i) => <RibbonTab key={t} $w={w} $on={i === 0}>{t}</RibbonTab>)}
        <Spacer />
        <Bare aria-label="Help"><HelpIcon /></Bare>
      </TabBar>
      <RibbonArea />
      <Workspace>
        <Swoosh width={1000} height={400} viewBox="0 0 1000 400" aria-hidden="true">
          <path d="M0 62C120 22 240 8 330 0H0z" fill="#b9d2f2" opacity={0.400} />
          <path d="M0 150C100 66 270 26 455 0H0z" fill="#b4cff1" opacity={0.400} />
        </Swoosh>
        <DocArea>
          <Paper>
            <PaperLine $gap={63}>SE</PaperLine>
            <PaperLine><span>n</span><span>a</span></PaperLine>
          </Paper>
        </DocArea>
        <ScrollRail>
          <svg width={8} height={2}><path d="M0 1h8" stroke="#333a55" strokeWidth={2} /></svg>
          <RailButton $h={18} aria-label="Ruler">
            <svg width={11} height={11} viewBox="0 0 11 11"><path d="M1 1h4v2h5v7H4V7H1z" fill="#f4f6fa" stroke="#3c4560" /><path d="M3 3v2M6 6v2M8 6v2" stroke="#3c4560" /></svg>
          </RailButton>
          <RailButton $h={17} $dark aria-label="Scroll up"><UpCaret c="#33466b" w={9} /></RailButton>
          <RailTrack><RailThumb><Grip c="#7b8496" /></RailThumb></RailTrack>
          <RailButton $h={17} $dark aria-label="Scroll down"><Caret c="#33466b" w={9} /></RailButton>
          <RailButton $h={16} aria-label="Previous page"><svg width={6} height={7}><path d="M3 0l3 3H0zM3 3l3 3H0z" fill="#111" /></svg></RailButton>
          <RailButton $h={16} aria-label="Browse object"><svg width={7} height={7}><circle cx={3.500} cy={3.500} r={2.800} fill="#cfd2cf" stroke="#222" /></svg></RailButton>
          <RailButton $h={16} aria-label="Next page"><svg width={6} height={7}><path d="M3 4L0 1h6zM3 7L0 4h6z" fill="#111" /></svg></RailButton>
        </ScrollRail>
        <NewStyleDialog />
        <ParagraphDialog />
        <StylesPane />
      </Workspace>
      <StatusBar>
        <StatusCell $w={79}>Page: 1 of 23</StatusCell>
        <StatusCell $w={73} $dim>Words: 392</StatusCell>
        <StatusCell $w={111}><SpellIcon />English (U.S.)</StatusCell>
        <Spacer />
        <StatusRight>
          <Views>
            <ViewButton $on aria-label="Print layout"><svg width={11} height={12}><path d="M.5.5h10v11H.5z" fill="#fff" stroke="#555" /><path d="M2 3h7M2 5h7M2 7h7M2 9h7" stroke="#666" /></svg></ViewButton>
            <ViewButton aria-label="Full screen"><svg width={12} height={11}><path d="M6 2C4 0 2 1 .5 1v9C2 10 4 9 6 10.500 8 9 10 10 11.500 10V1C10 1 8 0 6 2v8" fill="#f6f8fb" stroke="#555d6c" /><path d="M2 3h2M2 5h2M8 3h2M8 5h2" stroke="#777" /></svg></ViewButton>
            <ViewButton aria-label="Web layout"><svg width={13} height={12}><path d="M.5.5h9v9h-9z" fill="#fff" stroke="#555d6c" /><path d="M2 3h6M2 5h6" stroke="#777" /><circle cx={9} cy={8.500} r={3} fill="#3c8c5a" stroke="#2d5ca8" /></svg></ViewButton>
            <ViewButton aria-label="Outline"><svg width={12} height={11}><path d="M1 1h5M4 3.500h5M4 6h7M4 8.500h5M1 10.500h8" stroke="#777f8e" /></svg></ViewButton>
            <ViewButton aria-label="Draft"><svg width={11} height={11}><path d="M0 1h11M0 3.500h11M0 6h11M0 8.500h11M0 10.500h11" stroke="#5b6373" /></svg></ViewButton>
          </Views>
          <Percent>100%</Percent>
          <RoundButton aria-label="Zoom out"><svg width={7} height={7}><path d="M0 3.500h7" stroke="#333d52" strokeWidth={2} /></svg></RoundButton>
          <Zoom aria-label="Zoom" defaultValue={48} />
          <RoundButton aria-label="Zoom in"><svg width={7} height={7}><path d="M0 3.500h7M3.500 0v7" stroke="#333d52" strokeWidth={2} /></svg></RoundButton>
        </StatusRight>
      </StatusBar>
    </Shell>
  );
}
